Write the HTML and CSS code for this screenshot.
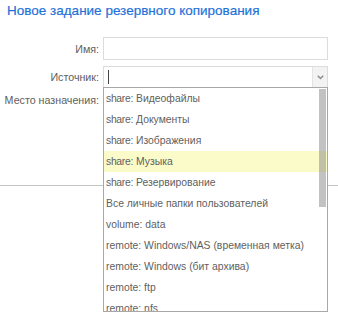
FILE: index.html
```html
<!DOCTYPE html>
<html lang="ru">
<head>
<meta charset="utf-8">
<link rel="stylesheet" href="styles.css">
</head>
<body>
<div class="page">
  <h1 class="title">Новое задание резервного копирования</h1>
  <div class="form">
    <div class="row">
      <label class="lbl">Имя:</label>
      <div class="field input"></div>
    </div>
    <div class="row">
      <label class="lbl">Источник:</label>
      <div class="field select">
        <span class="caret"></span>
        <span class="arrow"><svg width="7" height="5" viewBox="0 0 7 5"><path d="M0.8 0.8 L3.5 3.6 L6.2 0.8" fill="none" stroke="#8a8a8a" stroke-width="1.4"/></svg></span>
        <div class="dropdown">
          <ul class="options">
            <li><span class="pre">share:</span> Видеофайлы</li>
            <li><span class="pre">share:</span> Документы</li>
            <li><span class="pre">share:</span> Изображения</li>
            <li class="hl"><span class="pre">share:</span> Музыка</li>
            <li><span class="pre">share:</span> Резервирование</li>
            <li>Все личные папки пользователей</li>
            <li>volume: data</li>
            <li>remote: Windows/NAS (временная метка)</li>
            <li>remote: Windows (бит архива)</li>
            <li>remote: ftp</li>
            <li>remote: nfs</li>
          </ul>
          <div class="track"><div class="thumb"></div></div>
        </div>
      </div>
    </div>
    <div class="row row3">
      <label class="lbl">Место назначения:</label>
    </div>
  </div>
  <div class="divider"></div>
</div>
</body>
</html>
```
FILE: styles.css
```css
html, body {
  margin: 0;
  padding: 0;
  background: #fff;
}
body {
  width: 338px;
  height: 312px;
  overflow: hidden;
  font-family: "Liberation Sans", Arial, sans-serif;
}
.page {
  display: flex;
  flex-direction: column;
}
.title {
  margin: 0;
  padding: 3px 0 0 7px;
  font-size: 13.5px;
  line-height: 16px;
  font-weight: normal;
  color: #1f72d8;
  -webkit-text-stroke: 0.2px #1f72d8;
}
.form {
  margin-top: 18px;
  display: flex;
  flex-direction: column;
  gap: 6px;
}
.row {
  display: flex;
  align-items: center;
  gap: 4px;
}
.lbl {
  width: 99px;
  text-align: right;
  font-size: 10.7px;
  color: #606060;
  line-height: 14px;
}
.field {
  box-sizing: border-box;
  width: 225px;
  border: 1px solid #dcdcdc;
  background: #fff;
}
.input {
  height: 23px;
}
.select {
  height: 22px;
  position: relative;
  display: flex;
  align-items: center;
  justify-content: space-between;
}
.caret {
  width: 1px;
  height: 14px;
  margin-left: 4px;
  background: #444;
}
.arrow {
  box-sizing: border-box;
  width: 15px;
  height: 20px;
  background: #f3f3f3;
  border-left: 1px solid #e4e4e4;
  display: flex;
  align-items: center;
  justify-content: center;
}
.dropdown {
  position: absolute;
  left: -1px;
  top: 20px;
  box-sizing: border-box;
  width: 225px;
  height: 225px;
  border: 1px solid #a8a8a8;
  background: #fff;
  overflow: hidden;
  z-index: 2;
}
.options {
  list-style: none;
  margin: 0;
  padding: 0;
}
.options li {
  height: 21px;
  line-height: 21px;
  padding-left: 2px;
  font-size: 10.4px;
  color: #5f5f5f;
  white-space: nowrap;
}
.options li.hl {
  background: #fbfbc9;
}
.pre {
  letter-spacing: -0.3px;
}
.track {
  position: absolute;
  right: 1px;
  top: 0;
  width: 7px;
  height: 100%;
}
.thumb {
  margin-top: 1px;
  height: 118px;
  background: rgba(120, 120, 120, 0.45);
}
.row3 {
  margin-top: -2px;
}
.row3 .lbl {
  line-height: 16px;
}
.divider {
  margin-top: 77px;
  height: 1px;
  background: #c4c4c4;
}
```
